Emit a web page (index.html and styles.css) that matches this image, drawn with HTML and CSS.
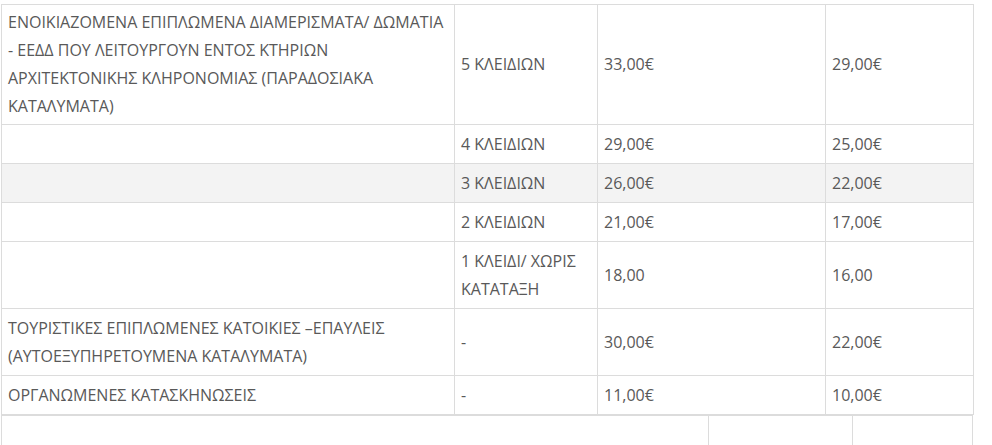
FILE: index.html
```html
<!DOCTYPE html>
<html lang="el">
<head>
<meta charset="utf-8">
<title>Τιμές καταλυμάτων</title>
<link rel="stylesheet" href="styles.css">
</head>
<body>
<div class="page">
  <table class="rates">
    <colgroup>
      <col class="c-type">
      <col class="c-class">
      <col class="c-high">
      <col class="c-low">
    </colgroup>
    <tbody>
      <tr class="lead">
        <td>ΕΝΟΙΚΙΑΖΟΜΕΝΑ ΕΠΙΠΛΩΜΕΝΑ ΔΙΑΜΕΡΙΣΜΑΤΑ/ ΔΩΜΑΤΙΑ - ΕΕΔΔ ΠΟΥ ΛΕΙΤΟΥΡΓΟΥΝ ΕΝΤΟΣ ΚΤΗΡΙΩΝ ΑΡΧΙΤΕΚΤΟΝΙΚΗΣ ΚΛΗΡΟΝΟΜΙΑΣ (ΠΑΡΑΔΟΣΙΑΚΑ ΚΑΤΑΛΥΜΑΤΑ)</td>
        <td>5 ΚΛΕΙΔΙΩΝ</td>
        <td>33,00€</td>
        <td>29,00€</td>
      </tr>
      <tr>
        <td></td>
        <td>4 ΚΛΕΙΔΙΩΝ</td>
        <td>29,00€</td>
        <td>25,00€</td>
      </tr>
      <tr class="alt">
        <td></td>
        <td>3 ΚΛΕΙΔΙΩΝ</td>
        <td>26,00€</td>
        <td>22,00€</td>
      </tr>
      <tr>
        <td></td>
        <td>2 ΚΛΕΙΔΙΩΝ</td>
        <td>21,00€</td>
        <td>17,00€</td>
      </tr>
      <tr>
        <td></td>
        <td>1 ΚΛΕΙΔΙ/ ΧΩΡΙΣ ΚΑΤΑΤΑΞΗ</td>
        <td>18,00</td>
        <td>16,00</td>
      </tr>
      <tr>
        <td>ΤΟΥΡΙΣΤΙΚΕΣ ΕΠΙΠΛΩΜΕΝΕΣ ΚΑΤΟΙΚΙΕΣ –ΕΠΑΥΛΕΙΣ (ΑΥΤΟΕΞΥΠΗΡΕΤΟΥΜΕΝΑ ΚΑΤΑΛΥΜΑΤΑ)</td>
        <td>-</td>
        <td>30,00€</td>
        <td>22,00€</td>
      </tr>
      <tr>
        <td>ΟΡΓΑΝΩΜΕΝΕΣ ΚΑΤΑΣΚΗΝΩΣΕΙΣ</td>
        <td>-</td>
        <td>11,00€</td>
        <td>10,00€</td>
      </tr>
    </tbody>
  </table>
  <table class="rates next">
    <colgroup>
      <col class="n-a">
      <col class="n-b">
      <col class="n-c">
    </colgroup>
    <tbody>
      <tr>
        <td>&nbsp;</td>
        <td>&nbsp;</td>
        <td>&nbsp;</td>
      </tr>
    </tbody>
  </table>
</div>
</body>
</html>
```

FILE: styles.css
```css
html, body {
  margin: 0;
  padding: 0;
  background: #ffffff;
}

.page {
  padding: 4px 0 0 1px;
  width: 972px;
}

.rates {
  width: 972px;
  border-collapse: collapse;
  table-layout: fixed;
  font-family: "Open Sans", "Noto Sans", sans-serif;
  font-size: 16px;
  line-height: 28px;
  color: #595959;
  border-bottom: 1px solid #dcdcdc;
}

.rates td {
  border: 1px solid #dcdcdc;
  padding: 5px 5px 5px 6px;
  vertical-align: middle;
  text-align: left;
}

.rates .lead td {
  padding-top: 3px;
  padding-bottom: 4px;
}

.rates .alt td {
  background: #f3f3f3;
}

.c-type { width: 453px; }
.c-class { width: 143px; }
.c-high { width: 228px; }
.c-low { width: 148px; }

.next {
  border-collapse: separate;
  border-spacing: 0;
  border: none;
}

.next td {
  border: none;
  border-left: 1px solid #dcdcdc;
  border-top: 1px solid #dcdcdc;
  height: 40px;
}

.next td:last-child {
  border-right: 1px solid #dcdcdc;
}

.n-a { width: 707px; }
.n-b { width: 144px; }
.n-c { width: 121px; }
```
